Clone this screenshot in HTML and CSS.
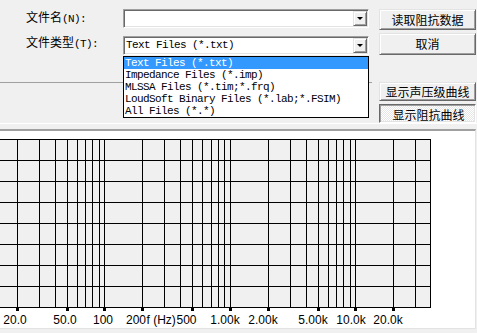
FILE: index.html
```html
<!DOCTYPE html>
<html lang="zh-CN">
<head>
    <meta charset="UTF-8">
    <title>读取阻抗数据</title>
    <link rel="stylesheet" href="styles.css">
</head>
<body>
    <div class="dialog">
        <div class="row row-name">
            <label class="label">文件名<span class="key">(N):</span></label>
            <div class="combo">
                <span class="combo-text"></span>
                <span class="arrow"></span>
            </div>
            <button class="btn">读取阻抗数据</button>
        </div>
        <div class="row row-type">
            <label class="label">文件类型<span class="key">(T):</span></label>
            <div class="combo">
                <span class="combo-text">Text Files (*.txt)</span>
                <span class="arrow"></span>
                <ul class="droplist">
                    <li class="active">Text Files (*.txt)</li>
                    <li>Impedance Files (*.imp)</li>
                    <li>MLSSA Files (*.tim;*.frq)</li>
                    <li>LoudSoft Binary Files (*.lab;*.FSIM)</li>
                    <li>All Files (*.*)</li>
                </ul>
            </div>
            <button class="btn">取消</button>
        </div>
        <div class="lower">
            <div class="rule"></div>
            <div class="toggles">
                <button class="btn">显示声压级曲线</button>
                <button class="btn pressed">显示阻抗曲线</button>
            </div>
        </div>
        <div class="etch"></div>
    </div>

    <div class="chart">
        <svg class="plot" width="475" height="197" viewBox="0 0 475 197">
            <!-- 网格底色 -->
            <rect x="0" y="8" width="431" height="168" fill="#f0f0f0"/>
            <!-- 横线 -->
            <path stroke="#000" stroke-width="1" fill="none"
                  d="M0 8.5H431 M0 29.5H431 M0 50.5H431 M0 71.5H431 M0 92.5H431 M0 113.5H431 M0 134.5H431 M0 155.5H431 M0 176.5H431"/>
            <!-- 竖线：20Hz ~ 40kHz 对数刻度 -->
            <path stroke="#000" stroke-width="1" fill="none"
                  d="M17.5 8V177 M39.5 8V177 M55.5 8V177 M67.5 8V177 M77.5 8V177 M85.5 8V177 M92.5 8V177 M99.5 8V177 M104.5 8V177
                     M142.5 8V177 M164.5 8V177 M180.5 8V177 M192.5 8V177 M202.5 8V177 M211.5 8V177 M218.5 8V177 M224.5 8V177 M230.5 8V177
                     M268.5 8V177 M290.5 8V177 M306.5 8V177 M318.5 8V177 M328.5 8V177 M336.5 8V177 M343.5 8V177 M350.5 8V177 M355.5 8V177
                     M393.5 8V177 M415.5 8V177 M430.5 8V177"/>
            <!-- 刻度 -->
            <g fill="#000">
                <rect x="16" y="176" width="3" height="4"/>
                <rect x="66" y="176" width="3" height="4"/>
                <rect x="103" y="176" width="3" height="4"/>
                <rect x="141" y="176" width="3" height="4"/>
                <rect x="191" y="176" width="3" height="4"/>
                <rect x="229" y="176" width="3" height="4"/>
                <rect x="267" y="176" width="3" height="4"/>
                <rect x="317" y="176" width="3" height="4"/>
                <rect x="354" y="176" width="3" height="4"/>
                <rect x="392" y="176" width="3" height="4"/>
            </g>
            <g class="axis" text-anchor="middle">
                <text x="15" y="193">20.0</text>
                <text x="65" y="193">50.0</text>
                <text x="103" y="193">100</text>
                <text x="146" y="193" text-anchor="end">200</text>
                <text x="146.5" y="193" text-anchor="start">f (Hz)</text>
                <text x="176.5" y="193" text-anchor="start">500</text>
                <text x="225" y="193">1.00k</text>
                <text x="263" y="193">2.00k</text>
                <text x="313" y="193">5.00k</text>
                <text x="351" y="193">10.0k</text>
                <text x="388" y="193">20.0k</text>
            </g>
        </svg>
    </div>
</body>
</html>
```

FILE: styles.css
```css
/* reset css */
ul,li {
    box-sizing: border-box;
    margin: 0;
    padding: 0;
    list-style: none;
}
html,body {
    margin: 0;
    padding: 0;
}
body {
    width: 477px;
    height: 333px;
    overflow: hidden;
    background-color: #f0f0f0;
    font-family: "Noto Sans CJK SC", sans-serif;
    font-size: 12px;
    color: #000;
}
/* dialog */
.dialog {
    padding-top: 9px;
}
.row {
    display: flex;
    padding-left: 26px;
}
.row-name {
    align-items: flex-start;
    height: 21px;
}
.row-type {
    align-items: flex-end;
    margin-top: 3px;
    height: 22px;
}
.label {
    width: 97px;
    line-height: 16px;
    white-space: nowrap;
    align-self: center;
}
.row-name .label {
    margin-top: -4px;
}
.row-type .label {
    margin-top: -3px;
}
.key {
    font-family: "Liberation Mono", monospace;
    font-size: 11px;
    letter-spacing: -0.6px;
}
/* combo */
.combo {
    position: relative;
    box-sizing: border-box;
    width: 246px;
    height: 19px;
    background-color: #fff;
    border: 1px solid;
    border-color: #a0a0a0 #fff #fff #a0a0a0;
    box-shadow: inset 1px 1px 0 #696969, inset -1px -1px 0 #e3e3e3;
}
.combo-text {
    display: block;
    padding-left: 2px;
    line-height: 17px;
    font-family: "Liberation Mono", monospace;
    font-size: 11px;
    letter-spacing: -0.6px;
}
.arrow {
    position: absolute;
    top: 1px;
    right: 1px;
    box-sizing: border-box;
    width: 14px;
    height: 15px;
    background-color: #f0f0f0;
    border: 1px solid;
    border-color: #e3e3e3 #696969 #696969 #e3e3e3;
    box-shadow: inset 1px 1px 0 #fff, inset -1px -1px 0 #a0a0a0;
}
.arrow:after {
    content: '';
    position: absolute;
    left: 3px;
    top: 5px;
    border-left: 3px solid transparent;
    border-right: 3px solid transparent;
    border-top: 3px solid #000;
}
.droplist {
    position: absolute;
    left: -1px;
    top: 19px;
    z-index: 2;
    width: 246px;
    height: 62px;
    border: 1px solid #000;
    background-color: #fff;
}
.droplist>li {
    height: 12px;
    padding-left: 1px;
    line-height: 12px;
    white-space: nowrap;
    font-family: "Liberation Mono", monospace;
    font-size: 11px;
    letter-spacing: -0.6px;
}
.droplist>.active {
    color: #fff;
    background-color: #3399ff;
}
/* buttons */
.btn {
    box-sizing: border-box;
    margin: 0 0 0 10px;
    padding: 0;
    width: 97px;
    height: 100%;
    font-family: "Noto Sans CJK SC", sans-serif;
    font-size: 12px;
    line-height: 14px;
    color: #000;
    background-color: #f0f0f0;
    border: 1px solid;
    border-color: #e3e3e3 #696969 #696969 #e3e3e3;
    box-shadow: inset 1px 1px 0 #fff, inset -1px -1px 0 #a0a0a0;
}
.btn.pressed {
    padding: 2px 0 0 2px;
    border-color: #696969 #fff #fff #696969;
    box-shadow: inset 1px 1px 0 #a0a0a0, inset -1px -1px 0 #e3e3e3;
    background: repeating-conic-gradient(#fff 0 25%, #e6e6e6 0 50%) 0 0/2px 2px;
}
.lower {
    display: flex;
    margin-top: 27px;
    height: 41px;
}
.rule {
    width: 372px;
    height: 0;
    border-top: 1px solid #a0a0a0;
}
.toggles {
    display: flex;
    flex-direction: column;
    gap: 3px;
    margin-left: auto;
    margin-right: 1px;
}
.toggles .btn {
    margin: 0;
    height: 19px;
}
.etch {
    height: 1px;
    background-color: #fff;
}
/* chart */
.chart {
    margin-top: 5px;
    width: 475px;
    height: 197px;
    background-color: #fff;
    border-top: 2px solid #a0a0a0;
    border-right: 1px solid #e3e3e3;
    border-bottom: 1px solid #e3e3e3;
}
.plot {
    display: block;
}
.axis {
    font-family: "Liberation Sans", Arial, sans-serif;
    font-size: 12px;
    fill: #000;
}
```
